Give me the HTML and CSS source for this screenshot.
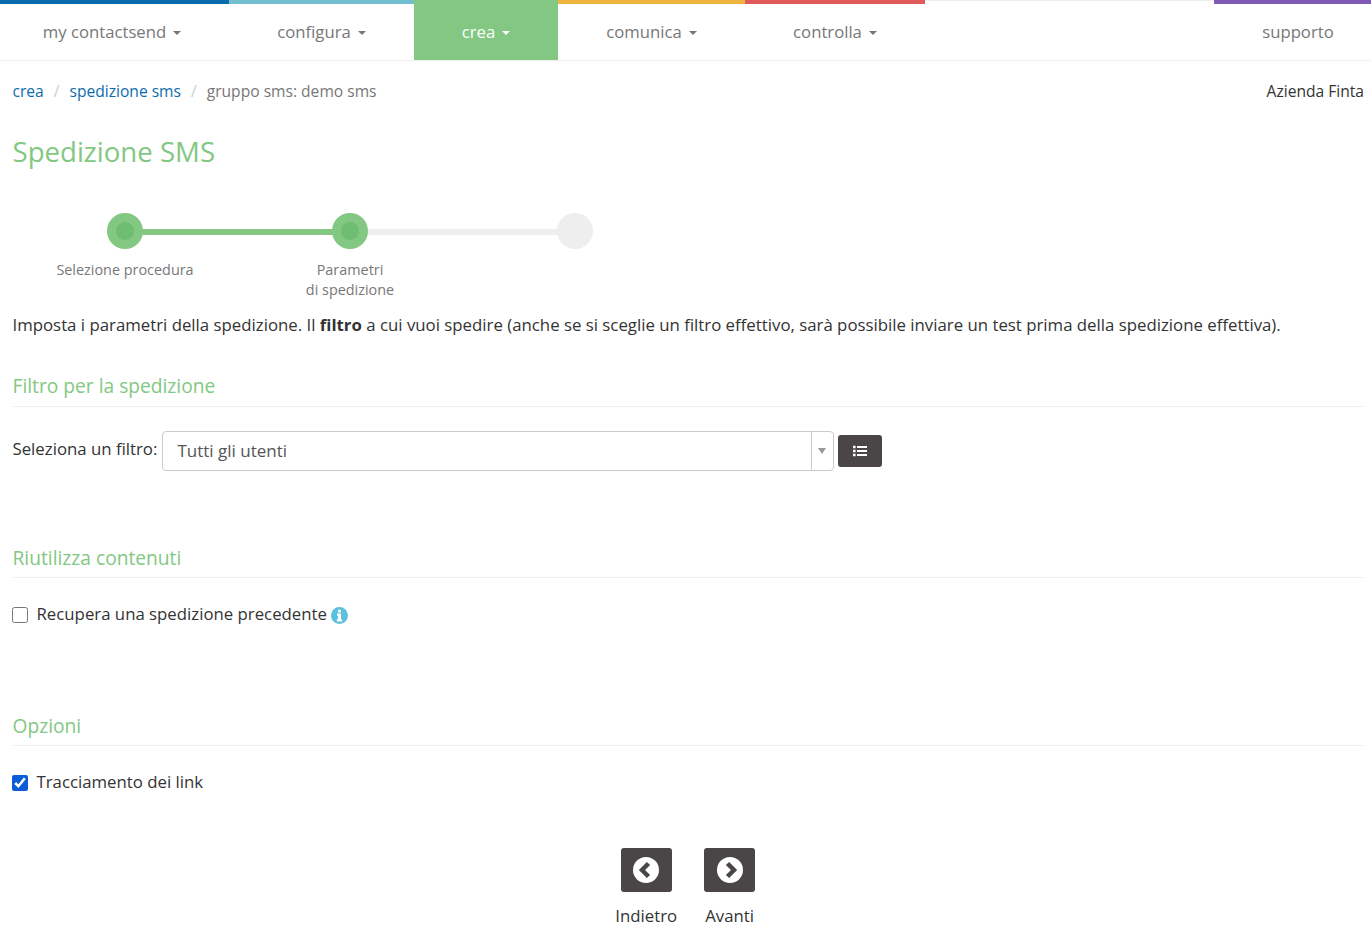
FILE: index.html
```html
<!DOCTYPE html>
<html lang="en">
<head>
	<meta charset="UTF-8">
	<title>Spedizione SMS</title>
	<link rel="stylesheet" href="styles.css">
</head>
<body>
<!-- menu principale -->
<nav class="topnav">
  <a href="#" class="nav-item blue">my contactsend <span class="caret"></span></a>
  <a href="#" class="nav-item teal">configura <span class="caret"></span></a>
  <a href="#" class="nav-item green active">crea <span class="caret"></span></a>
  <a href="#" class="nav-item orange">comunica <span class="caret"></span></a>
  <a href="#" class="nav-item red">controlla <span class="caret"></span></a>
  <a href="#" class="nav-item purple">supporto</a>
</nav>

<div class="content">
  <div class="crumbs">
    <ul>
      <li><a href="#">crea</a></li>
      <li class="sep">/</li>
      <li><a href="#">spedizione sms</a></li>
      <li class="sep">/</li>
      <li class="here">gruppo sms: demo sms</li>
    </ul>
    <span class="company">Azienda Finta</span>
  </div>

  <h1>Spedizione SMS</h1>

  <div class="steps">
    <div class="step done"><span class="dot"></span><p>Selezione procedura</p></div>
    <div class="step now"><span class="dot"></span><p>Parametri<br>di spedizione</p></div>
    <div class="step"><span class="dot"></span></div>
  </div>

  <p class="intro">Imposta i parametri della spedizione. Il <b>filtro</b> a cui vuoi spedire (anche se si sceglie un filtro effettivo, sarà possibile inviare un test prima della spedizione effettiva).</p>

  <h2 class="first">Filtro per la spedizione</h2>
  <div class="filter-row">
    <label>Seleziona un filtro:</label>
    <div class="combo">
      <span class="combo-text">Tutti gli utenti</span>
      <span class="combo-arrow"></span>
    </div>
    <a href="#" class="btn-list">
      <svg width="14" height="12" viewBox="0 0 14 12"><path fill="#fff" d="M0 .8h2.6v2.4H0zM0 4.8h2.6v2.4H0zM0 8.8h2.6v2.4H0zM4 1h10v2H4zM4 5h10v2H4zM4 9h10v2H4z"/></svg>
    </a>
  </div>

  <h2 class="second">Riutilizza contenuti</h2>
  <label class="check">
    <input type="checkbox"> Recupera una spedizione precedente
    <svg class="info" width="17" height="17" viewBox="0 0 17 17"><circle cx="8.5" cy="8.5" r="8.5" fill="#5bc0de"/><path fill="#fff" d="M7 2.8h3v2.6H7zM6 6.6h4v5.6h1.2v2.2H5.8v-2.2H7V8.8H6z"/></svg>
  </label>

  <h2 class="third">Opzioni</h2>
  <label class="check">
    <input type="checkbox" checked> Tracciamento dei link
  </label>

  <div class="pager">
    <a href="#" class="pager-item">
      <span class="btn-round">
        <svg width="26" height="26" viewBox="0 0 26 26"><circle cx="13" cy="13" r="13" fill="#fff"/><path fill="none" stroke="#4a4546" stroke-width="4.5" d="M15.5 6.5 9 13l6.5 6.5"/></svg>
      </span>
      Indietro
    </a>
    <a href="#" class="pager-item">
      <span class="btn-round">
        <svg width="26" height="26" viewBox="0 0 26 26"><circle cx="13" cy="13" r="13" fill="#fff"/><path fill="none" stroke="#4a4546" stroke-width="4.5" d="M10.5 6.5 17 13l-6.5 6.5"/></svg>
      </span>
      Avanti
    </a>
  </div>
</div>
</body>
</html>
```
FILE: styles.css
```css
* {
  margin: 0;
  padding: 0;
  box-sizing: border-box;
}

ul {
  list-style: none;
}

a {
  text-decoration: none;
}

body {
  font-family: "Open Sans", "Noto Sans", sans-serif;
  font-size: 16.8px;
  line-height: 24px;
  color: #333;
  background-color: #fff;
}

/* menu */
.topnav {
  display: flex;
  height: 61px;
  border-top: 1px solid #eee;
  border-bottom: 1px solid #eee;
}

.nav-item {
  display: flex;
  align-items: center;
  justify-content: center;
  gap: 7px;
  height: 60px;
  margin-top: -1px;
  border-top: 4px solid transparent;
  color: #777;
  font-size: 16.7px;
}

.nav-item.blue { width: 229px; padding-right: 5px; border-top-color: #0b6cad; }
.nav-item.teal { width: 185px; border-top-color: #72bfce; }
.nav-item.green { width: 144px; border-top-color: #82c882; }
.nav-item.orange { width: 187px; border-top-color: #efb23f; }
.nav-item.red { width: 180px; border-top-color: #e05a5a; }
.nav-item.purple { width: 157px; margin-left: auto; padding-left: 11px; border-top-color: #8059b6; }

.nav-item.active {
  background-color: #82c882;
  color: #fff;
}

.caret {
  width: 0;
  height: 0;
  margin-top: 2px;
  border-top: 4px solid currentColor;
  border-left: 4px solid transparent;
  border-right: 4px solid transparent;
}

/* contenuto */
.content {
  padding: 0 7px 0 12.5px;
}

.crumbs {
  display: flex;
  justify-content: space-between;
  padding-top: 18px;
  font-size: 15.6px;
}

.crumbs ul {
  display: flex;
}

.crumbs a {
  color: #0b6cad;
}

.crumbs .sep {
  padding: 0 10px;
  color: #ccc;
}

.crumbs .here {
  color: #777;
}

h1 {
  margin-top: 29px;
  font-size: 27.6px;
  line-height: 38px;
  font-weight: 400;
  color: #82c882;
}

.steps {
  display: flex;
  margin-top: 43px;
}

.step {
  position: relative;
  width: 225px;
  height: 92px;
  text-align: center;
}

.step .dot {
  display: block;
  position: relative;
  width: 36px;
  height: 36px;
  margin: 0 auto;
  border-radius: 50%;
  background-color: #eee;
  z-index: 1;
}

.step:not(:last-child)::after {
  content: "";
  position: absolute;
  top: 16px;
  left: 112px;
  width: 225px;
  height: 6px;
  background-color: #eee;
}

.step.done::after {
  background-color: #82c882;
}

.step.done .dot,
.step.now .dot {
  background-color: #82c882;
}

.step.done .dot::after,
.step.now .dot::after {
  content: "";
  display: block;
  position: absolute;
  top: 9px;
  left: 9px;
  width: 18px;
  height: 18px;
  border-radius: 50%;
  background-color: #6fbd72;
}

.step p {
  margin-top: 11px;
  font-size: 14.4px;
  line-height: 20px;
  color: #777;
}

.intro {
  margin-top: 8px;
  font-size: 16.815px;
}

h2 {
  padding-bottom: 6px;
  border-bottom: 1px solid #eee;
  font-size: 19.2px;
  line-height: 28px;
  font-weight: 400;
  color: #82c882;
}

h2.first { margin-top: 35px; }
h2.second { margin-top: 73px; padding-bottom: 5px; }
h2.third { margin-top: 86px; padding-bottom: 5px; }

.filter-row {
  display: flex;
  align-items: center;
  gap: 4px;
  margin-top: 24px;
}

.filter-row label {
  padding-bottom: 4px;
}

.combo {
  display: flex;
  align-items: center;
  width: 672px;
  height: 40px;
  margin-left: 1px;
  border: 1px solid #ccc;
  border-radius: 4px;
}

.combo-text {
  flex: 1;
  height: 38px;
  padding-left: 14px;
  border-right: 1px solid #ccc;
  color: #555;
  font-size: 17px;
  line-height: 38px;
}

.combo-arrow {
  width: 0;
  height: 0;
  margin: 0 7px 0 6px;
  border-top: 6px solid #999;
  border-left: 4px solid transparent;
  border-right: 4px solid transparent;
}

.btn-list {
  display: flex;
  align-items: center;
  justify-content: center;
  width: 44px;
  height: 32px;
  border-radius: 3px;
  background-color: #4a4546;
}

.check {
  display: flex;
  align-items: center;
  gap: 8.5px;
  margin-top: 24px;
}

.check input {
  width: 16px;
  height: 16px;
  margin: 2px 0 0 -0.5px;
  accent-color: #0b5ed7;
}

.info {
  margin: 2px 0 0 -4.5px;
}

.pager {
  display: flex;
  justify-content: center;
  gap: 27px;
  margin-top: 54px;
  padding-right: 6px;
}

.pager-item {
  display: flex;
  flex-direction: column;
  align-items: center;
  gap: 12px;
  color: #333;
}

.btn-round {
  display: flex;
  align-items: center;
  justify-content: center;
  width: 51px;
  height: 44px;
  border-radius: 3px;
  background-color: #4a4546;
}
```
